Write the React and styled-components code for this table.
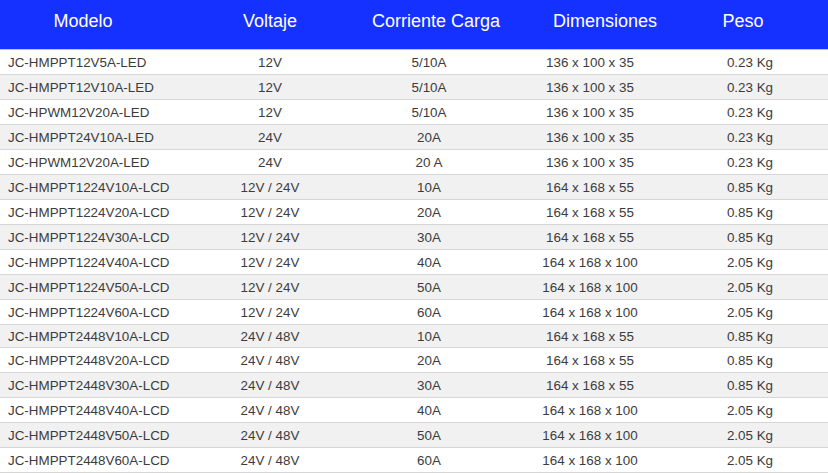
import styled, { createGlobalStyle } from "styled-components";

const GlobalStyle = createGlobalStyle`
  body {
    margin: 0;
    background: #ffffff;
    font-family: "Liberation Sans", Arial, Helvetica, sans-serif;
  }
`

const COLS = "190px 160px 158px 164px 156px";

const Table = styled.div`
  width: 828px;
  height: 473px;
  overflow: hidden;
  display: flex;
  flex-direction: column;
`

const HeaderRow = styled.div`
  display: grid;
  grid-template-columns: ${COLS};
  height: 49px;
  background: #1531ff;
  border-bottom: 1px solid #b9d58f;
`

const HeaderCell = styled.div`
  padding: 10px ${props => props.right || 0}px 0 ${props => props.left || 0}px;
  text-align: center;
  font-size: 18px;
  line-height: 23px;
  color: #ffffff;
`

const Row = styled.div`
  display: grid;
  grid-template-columns: ${COLS};
  align-items: center;
  height: ${props => props.short ? "22px" : "24px"};
  background: ${props => props.striped ? "#f1f1f1" : "#ffffff"};
  border-bottom: 1px solid #d6d6d6;
`

const Cell = styled.div`
  font-size: 13.4px;
  line-height: 17px;
  color: #3c3c3c;
  text-align: ${props => props.left ? "left" : "center"};
  padding-left: ${props => props.left ? "8px" : "0"};
  white-space: nowrap;
`

const rows = [
  ["JC-HMPPT12V5A-LED", "12V", "5/10A", "136 x 100 x 35", "0.23 Kg"],
  ["JC-HMPPT12V10A-LED", "12V", "5/10A", "136 x 100 x 35", "0.23 Kg"],
  ["JC-HPWM12V20A-LED", "12V", "5/10A", "136 x 100 x 35", "0.23 Kg"],
  ["JC-HMPPT24V10A-LED", "24V", "20A", "136 x 100 x 35", "0.23 Kg"],
  ["JC-HPWM12V20A-LED", "24V", "20 A", "136 x 100 x 35", "0.23 Kg"],
  ["JC-HMPPT1224V10A-LCD", "12V / 24V", "10A", "164 x 168 x 55", "0.85 Kg"],
  ["JC-HMPPT1224V20A-LCD", "12V / 24V", "20A", "164 x 168 x 55", "0.85 Kg"],
  ["JC-HMPPT1224V30A-LCD", "12V / 24V", "30A", "164 x 168 x 55", "0.85 Kg"],
  ["JC-HMPPT1224V40A-LCD", "12V / 24V", "40A", "164 x 168 x 100", "2.05 Kg"],
  ["JC-HMPPT1224V50A-LCD", "12V / 24V", "50A", "164 x 168 x 100", "2.05 Kg"],
  ["JC-HMPPT1224V60A-LCD", "12V / 24V", "60A", "164 x 168 x 100", "2.05 Kg"],
  ["JC-HMPPT2448V10A-LCD", "24V / 48V", "10A", "164 x 168 x 55", "0.85 Kg"],
  ["JC-HMPPT2448V20A-LCD", "24V / 48V", "20A", "164 x 168 x 55", "0.85 Kg"],
  ["JC-HMPPT2448V30A-LCD", "24V / 48V", "30A", "164 x 168 x 55", "0.85 Kg"],
  ["JC-HMPPT2448V40A-LCD", "24V / 48V", "40A", "164 x 168 x 100", "2.05 Kg"],
  ["JC-HMPPT2448V50A-LCD", "24V / 48V", "50A", "164 x 168 x 100", "2.05 Kg"],
  ["JC-HMPPT2448V60A-LCD", "24V / 48V", "60A", "164 x 168 x 100", "2.05 Kg"],
];

export default function App() {
  return (
    <>
      <GlobalStyle/>
      <Table>
        <HeaderRow>
          <HeaderCell right={24}>Modelo</HeaderCell>
          <HeaderCell>Voltaje</HeaderCell>
          <HeaderCell left={14}>Corriente Carga</HeaderCell>
          <HeaderCell left={30}>Dimensiones</HeaderCell>
          <HeaderCell right={14}>Peso</HeaderCell>
        </HeaderRow>
        {rows.map((r, i) => (
          <Row key={i} striped={i % 2 === 1} short={i === 11}>
            <Cell left>{r[0]}</Cell>
            <Cell>{r[1]}</Cell>
            <Cell>{r[2]}</Cell>
            <Cell>{r[3]}</Cell>
            <Cell>{r[4]}</Cell>
          </Row>
        ))}
      </Table>
    </>
  );
}
